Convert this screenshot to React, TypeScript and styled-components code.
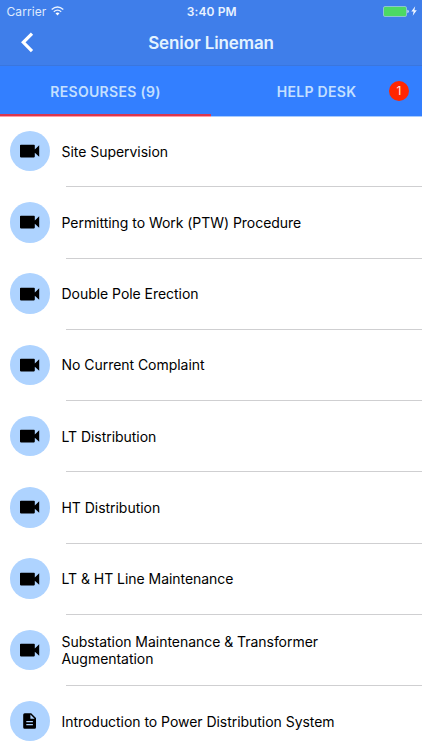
import React from "react";
import styled, { createGlobalStyle } from "styled-components";

const GlobalStyle = createGlobalStyle`
  * { box-sizing: border-box; }
  html, body { margin: 0; height: 100%; overflow: hidden; background: #fff; }
  body { font-family: Inter, "Liberation Sans", sans-serif; }
`;

const Screen = styled.div`
  display: flex;
  flex-direction: column;
  width: 100%;
  height: 750px;
  overflow: hidden;
  background: #fff;
`;

const Header = styled.header`
  flex: none;
  height: 66px;
  background: #3f7eea;
  border-bottom: 1px solid #3a76de;
  color: #fff;
`;

const StatusBar = styled.div`
  display: grid;
  grid-template-columns: 1fr auto 1fr;
  align-items: center;
  height: 22px;
  padding: 0 5px 0 6.5px;
`;

const Carrier = styled.div`
  display: flex;
  align-items: center;
  gap: 5px;
  font-size: 12px;
  letter-spacing: 0.08px;
  color: #dfeafd;
`;

const Clock = styled.div`
  font-size: 12px;
  font-weight: 600;
  letter-spacing: 0.12px;
  color: #e9f2ff;
`;

const Power = styled.div`
  display: flex;
  justify-content: flex-end;
  align-items: center;
  gap: 2px;
`;

const TitleBar = styled.div`
  display: grid;
  grid-template-columns: 60px 1fr 60px;
  align-items: center;
  height: 42px;
`;

const BackButton = styled.button`
  display: flex;
  align-items: center;
  height: 40px;
  padding: 0 0 2px 21px;
  border: 0;
  background: none;
`;

const Title = styled.h1`
  margin: 0;
  text-align: center;
  font-size: 17px;
  line-height: 24px;
  font-weight: 600;
  letter-spacing: -0.12px;
  color: #e4f3ff;
`;

const Tabs = styled.nav`
  flex: none;
  display: grid;
  grid-template-columns: 1fr 1fr;
  height: 51px;
  background: #337fff;
`;

const Tab = styled.button<{ $active?: boolean }>`
  display: flex;
  align-items: center;
  justify-content: center;
  padding: 1px 0 1px;
  border: 0;
  border-bottom: 1px solid ${(p) => (p.$active ? "#ff9ca3" : "#a6cbff")};
  box-shadow: inset 0 -2px 0 ${(p) => (p.$active ? "#d9364f" : "transparent")};
  background: none;
  color: #c5e0ff;
  font-family: inherit;
  font-size: 14px;
  font-weight: 600;
  letter-spacing: 0.3px;
  position: relative;
`;

const Badge = styled.span`
  position: absolute;
  right: 13px;
  top: 15px;
  width: 20px;
  height: 20px;
  border-radius: 50%;
  background: #ff2600;
  color: #ffe6df;
  font-size: 12px;
  font-weight: 400;
  line-height: 20px;
  text-align: center;
`;

const List = styled.ul`
  margin: -1px 0 0;
  padding: 0;
  list-style: none;
`;

const Row = styled.li`
  display: flex;
  flex-direction: column;
  height: 71.25px;
`;

const RowBody = styled.div`
  flex: 1;
  display: flex;
  align-items: center;
  gap: 11.5px;
  padding-left: 9.5px;
`;

const Avatar = styled.div`
  flex: none;
  display: flex;
  align-items: center;
  justify-content: center;
  width: 40.5px;
  height: 40.5px;
  border-radius: 50%;
  background: #aed3ff;
`;

const Label = styled.div`
  width: 300px;
  font-size: 14px;
  line-height: 17px;
  letter-spacing: -0.04px;
  color: #000;
`;

const Divider = styled.div`
  flex: none;
  height: 1px;
  margin-left: 66.4px;
  background: #cfcfd1;
`;

const WifiIcon = () => (
  <svg width="13" height="10" viewBox="0 0 13 10" fill="none" stroke="#e9f2ff">
    <path d="M.7 3.5Q6.5-1.5 12.3 3.5" strokeWidth="1.5" />
    <path d="M2.8 5.7Q6.5 2.6 10.2 5.7" strokeWidth="1.4" />
    <path d="M4.5 7.2Q6.5 5.7 8.5 7.2L6.5 9.4Z" fill="#fff" stroke="none" />
  </svg>
);

const BatteryIcon = () => (
  <svg width="26" height="11" viewBox="0 0 26 11">
    <rect x=".5" y=".5" width="23" height="10" rx="1.5" fill="#4cd964" stroke="#8cc4d2" />
    <path d="M24.4 3.8q1.4.3 1.4 1.7t-1.4 1.7z" fill="#d5e6fb" />
  </svg>
);

const BoltIcon = () => (
  <svg width="6" height="10" viewBox="0 0 6 10">
    <path d="M4.2.2.3 5.6h2.3L1.7 9.8 5.8 4.2H3.4z" fill="#f2f7ff" />
  </svg>
);

const BackIcon = () => (
  <svg width="13" height="21" viewBox="0 0 13 21" fill="none" stroke="#fff" strokeWidth="3.2">
    <path d="M11 1.6 2.3 10.3 11 19.2" />
  </svg>
);

const VideoIcon = () => (
  <svg width="20" height="14" viewBox="0 0 20 14">
    <path d="M.8.7h13.2q.8 0 .8.8v3.9l4.4-4.1v11.5L14.800 8.700v3.900q0 .8-.8.8H.8q-.8 0-.8-.8V1.500Q0 .7.8.7z" />
  </svg>
);

const DocumentIcon = () => (
  <svg width="14" height="16" viewBox="0 0 14 16">
    <path
      fillRule="evenodd"
      d="M1.7.2h6.500L13 5v9.300q0 1.500-1.500 1.500H1.700Q.2 15.800.2 14.300V1.700Q.2.2 1.700.2zM7.400 1.500v4.300h4.200zM3.300 8.100v1.200h6.600V8.100zm0 3v1.200h6.600v-1.200z"
    />
  </svg>
);

type Resource = { title: string; kind: "video" | "document" };

const resources: Resource[] = [
  { title: "Site Supervision", kind: "video" },
  { title: "Permitting to Work (PTW) Procedure", kind: "video" },
  { title: "Double Pole Erection", kind: "video" },
  { title: "No Current Complaint", kind: "video" },
  { title: "LT Distribution", kind: "video" },
  { title: "HT Distribution", kind: "video" },
  { title: "LT & HT Line Maintenance", kind: "video" },
  { title: "Substation Maintenance & Transformer Augmentation", kind: "video" },
  { title: "Introduction to Power Distribution System", kind: "document" },
];

export default function App() {
  return (
    <Screen>
      <GlobalStyle />
      <Header>
        <StatusBar>
          <Carrier>
            Carrier
            <WifiIcon />
          </Carrier>
          <Clock>3:40 PM</Clock>
          <Power>
            <BatteryIcon />
            <BoltIcon />
          </Power>
        </StatusBar>
        <TitleBar>
          <BackButton aria-label="Back">
            <BackIcon />
          </BackButton>
          <Title>Senior Lineman</Title>
        </TitleBar>
      </Header>
      <Tabs>
        <Tab $active>RESOURSES (9)</Tab>
        <Tab>
          HELP DESK
          <Badge>1</Badge>
        </Tab>
      </Tabs>
      <List>
        {resources.map((r) => (
          <Row key={r.title}>
            <RowBody>
              <Avatar>{r.kind === "video" ? <VideoIcon /> : <DocumentIcon />}</Avatar>
              <Label>{r.title}</Label>
            </RowBody>
            <Divider />
          </Row>
        ))}
      </List>
    </Screen>
  );
}
